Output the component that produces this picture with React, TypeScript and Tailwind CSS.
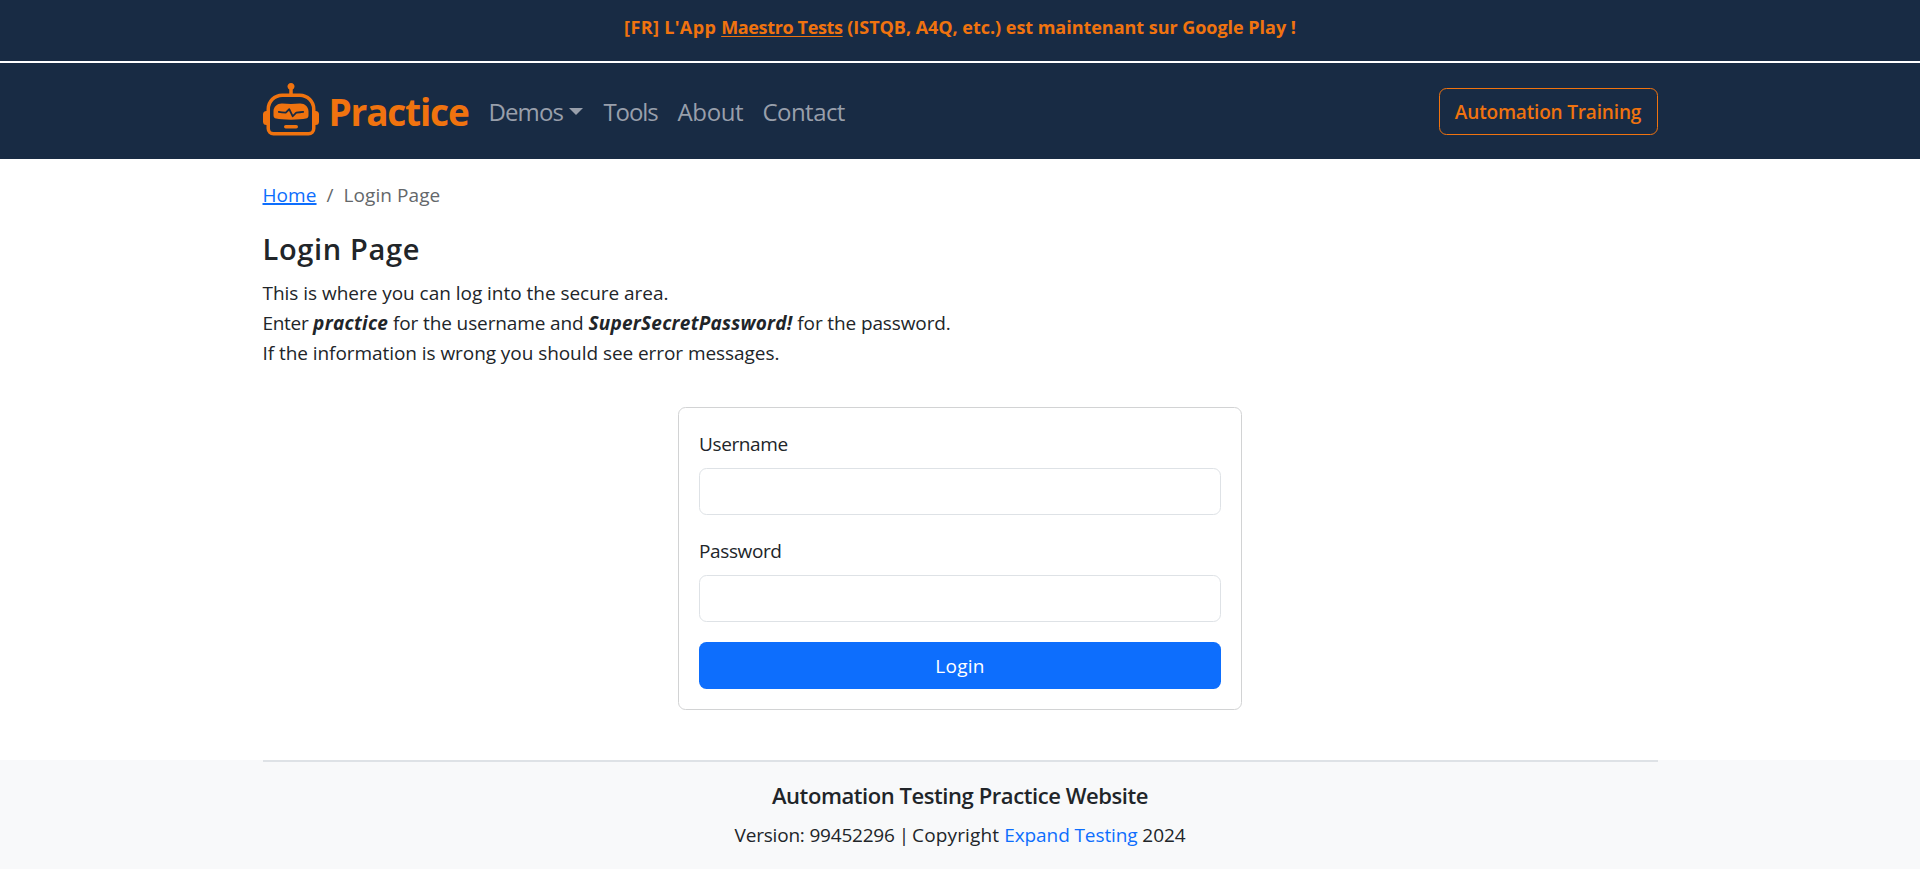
import React from 'react';
import { BsRobot } from 'react-icons/bs';

function TopBanner() {
  return (
    <div className="h-[63px] border-b-2 border-white bg-[#182b44] pt-3 text-center text-[18px] leading-[30px] font-bold tracking-[-0.03px] text-[#f0730f]">
      <span className="tracking-[0.35px]">[FR] L'App </span>
      <a href="#" className="tracking-[-0.35px] underline decoration-1 underline-offset-2">Maestro Tests</a>{' '}
      (ISTQB, A4Q, etc.) est maintenant sur Google Play !
    </div>
  );
}

function Navbar() {
  return (
    <nav className="h-24 bg-[#182b44]">
      <div className="mx-auto flex h-full w-[1395px] items-center">
        <a href="#" className="flex w-[226px] items-center gap-[10px] text-[#f0730f]">
          <BsRobot size={56} />
          <span className="pt-0.5 text-[37px] leading-[54px] font-bold tracking-[-1.2px] whitespace-nowrap">Practice</span>
        </a>
        <div className="flex gap-5 pt-0.5 text-2xl leading-[38px] whitespace-nowrap text-[#989fab]">
          <a href="#" className="flex w-[94px] items-center justify-between tracking-[-0.9px]">
            Demos
            <span className="mb-0.5 border-x-[7px] border-t-[7px] border-x-transparent border-t-current" />
          </a>
          <a href="#" className="w-[55px] pl-px tracking-[-1.1px]">Tools</a>
          <a href="#" className="w-[65px] tracking-[-0.35px]">About</a>
          <a href="#" className="tracking-[-0.55px]">Contact</a>
        </div>
        <a
          href="#"
          className="ml-auto flex h-[47px] w-[219px] items-center justify-center rounded-[7.5px] border border-[#f0730f] pt-0.5 text-[19px] font-semibold tracking-[-0.17px] text-[#f0730f]"
        >
          Automation Training
        </a>
      </div>
    </nav>
  );
}

function Field({ id, label, type }: { id: string; label: string; type: string }) {
  return (
    <div className="mb-5">
      <label htmlFor={id} className="mb-[9px] block pt-px leading-[30px] tracking-[-0.38px]">{label}</label>
      <input id={id} type={type} className="block h-[47px] w-full rounded-[7.5px] border border-[#dee2e6] bg-white px-[15px] outline-none" />
    </div>
  );
}

export default function App() {
  return (
    <div className="flex h-[869px] flex-col overflow-hidden bg-white font-['Open_Sans','Noto_Sans',sans-serif] text-[19px] leading-[30px] text-[#212529]">
      <TopBanner />
      <Navbar />
      <main className="mx-auto w-[1395px] grow pt-[21px]">
        <nav className="flex tracking-[0.08px]">
          <a href="#" className="w-[54px] text-[#0d6efd] underline decoration-2 underline-offset-1">Home</a>
          <span className="w-[27px] text-center text-[#64676a]">/</span>
          <span className="text-[#64676a]">Login Page</span>
        </nav>
        <h1 className="mt-[21px] text-[29px] leading-9 font-semibold tracking-[0.65px]">Login Page</h1>
        <p className="mt-[11px]">
          <span className="tracking-[-0.03px]">This is where you can log into the secure area.</span>
          <br />
          <span className="tracking-[-0.12px]">
            <span className="tracking-[-0.3px]">Enter </span>
            <b className="tracking-[0.27px] italic">practice</b> for the username and{' '}
            <b className="tracking-[0.24px] italic">SuperSecretPassword!</b> for the password.
          </span>
          <br />
          <span className="tracking-[-0.06px]">If the information is wrong you should see error messages.</span>
        </p>
        <form className="mx-auto mt-[39px] h-[303px] w-[564px] rounded-[7.5px] border border-[#d2d3d4] px-5 pt-5">
          <Field id="username" label="Username" type="text" />
          <Field id="password" label="Password" type="password" />
          <button type="button" className="h-[47px] w-full rounded-[7.5px] bg-[#0d6efd] tracking-[0.3px] text-white">Login</button>
        </form>
      </main>
      <footer className="h-[109px] bg-[#f8f9fa] text-center">
        <div className="mx-auto w-[1395px] border-t-2 border-[#dee2e6] pt-[19px]">
          <h2 className="text-[22px] leading-7 font-semibold tracking-[-0.43px]">Automation Testing Practice Website</h2>
          <p className="mt-[11px] tracking-[-0.1px]">
            <span className="tracking-[-0.2px]">Version: 99452296</span>
            <span className="tracking-[-1px]"> | </span>
            <span className="tracking-[0.15px]">Copyright </span>
            <a href="#" className="text-[#0d6efd]">Expand Testing</a> 2024
          </p>
        </div>
      </footer>
    </div>
  );
}
